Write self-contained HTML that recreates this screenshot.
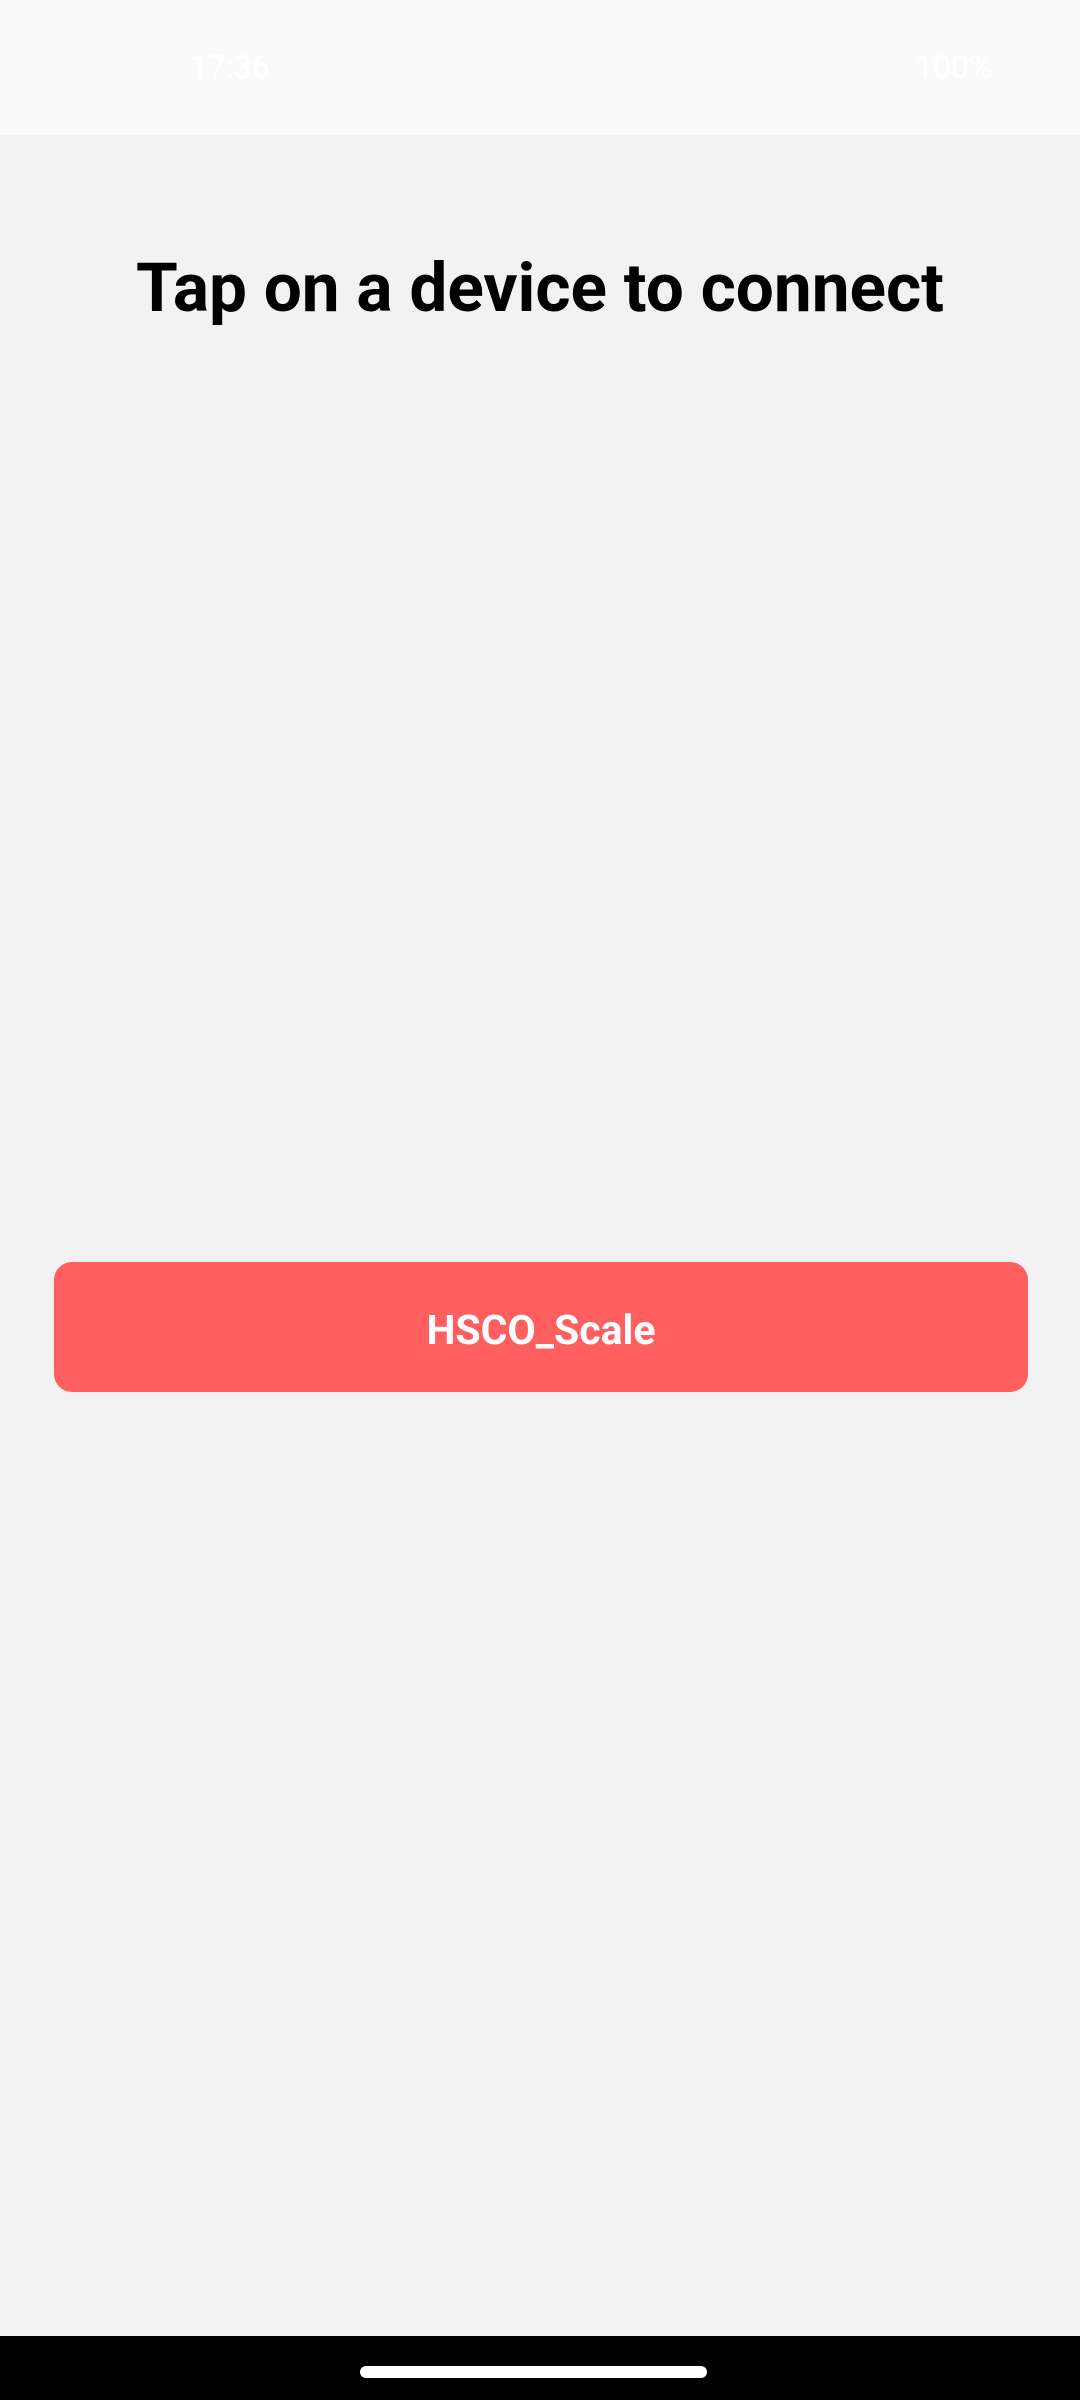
<!DOCTYPE html>
<html><head><style>
html,body{margin:0;padding:0}
body{width:1080px;height:2400px;background:#f2f2f2;position:relative;overflow:hidden;font-family:"Roboto","Liberation Sans",sans-serif}
.sb{position:absolute;left:0;top:0;width:1080px;height:135px;background:#fafafa}
.sb span{position:absolute;color:#fff;font-size:32px;top:48px}
h1{position:absolute;top:247px;left:0;width:1080px;text-align:center;margin:0;font-size:67.5px;font-weight:bold;color:#000;line-height:84px}
.btn{position:absolute;left:54px;top:1262px;width:974px;height:130px;background:#ff5f5f;border-radius:18px;color:#fff;font-weight:bold;font-size:41px;line-height:138px;text-align:center}
.nav{position:absolute;left:0;top:2336px;width:1080px;height:64px;background:#000}
.home{position:absolute;left:360px;top:2366px;width:347px;height:12px;border-radius:6px;background:#fff}
</style></head><body>
<div class="sb"><span style="left:190px">17:36</span><span style="left:915px">100%</span></div>
<h1>Tap on a device to connect</h1>
<div class="btn">HSCO_Scale</div>
<div class="nav"></div><div class="home"></div>
</body></html>
